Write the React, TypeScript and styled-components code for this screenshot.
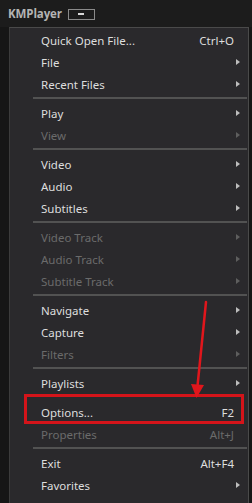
import styled, { createGlobalStyle } from "styled-components";

const GlobalStyle = createGlobalStyle`
  html, body {
    margin: 0;
    padding: 0;
    background-color: #151515;
    font-family: "Noto Sans", "Liberation Sans", sans-serif;
  }
`;

const Screen = styled.div`
  position: relative;
  width: 252px;
  height: 503px;
  overflow: hidden;
  background-color: #151515;
`;

const TitleBar = styled.div`
  display: flex;
  align-items: center;
  gap: 6px;
  height: 27px;
  padding: 0 0 0 8px;
  background-color: #1c1c1c;
`;

const AppName = styled.span`
  font-family: "Open Sans", "Liberation Sans", sans-serif;
  font-size: 11.5px;
  font-weight: 700;
  color: #b4b4b4;
  letter-spacing: -0.1px;
`;

const MinButton = styled.div`
  display: flex;
  align-items: center;
  justify-content: center;
  width: 25px;
  height: 9px;
  border: 1px solid #8a8a8a;
  margin-top: 1px;

  &::after {
    content: "";
    width: 6px;
    height: 2px;
    background-color: #d8d8d8;
  }
`;

const Body = styled.div`
  display: flex;
  height: 476px;
`;

const Gutter = styled.div<{ $w: number }>`
  width: ${(p) => p.$w}px;
  flex-shrink: 0;
  background-color: #161616;
`;

const Menu = styled.div`
  flex: 1;
  display: flex;
  flex-direction: column;
  padding-top: 1px;
  background-color: #2a292c;
  border-top: 1px solid #4a4a4a;
  border-left: 1px solid #3c3c3c;
  border-right: 1px solid #4a4a4a;
`;

const Item = styled.div<{ $disabled?: boolean; $extra?: number }>`
  display: flex;
  align-items: center;
  height: 22px;
  margin-top: ${(p) => p.$extra ?? 0}px;
  padding: 0 8px 0 31px;
  font-size: 11.5px;
  color: ${(p) => (p.$disabled ? "#6b6b6b" : "#dedede")};
`;

const Label = styled.span`
  flex: 1;
  white-space: nowrap;
`;

const Shortcut = styled.span`
  margin-right: 6px;
  white-space: nowrap;
`;

const Arrow = styled.span<{ $disabled?: boolean }>`
  width: 0;
  height: 0;
  border-top: 3.5px solid transparent;
  border-bottom: 3.5px solid transparent;
  border-left: 4px solid ${(p) => (p.$disabled ? "#5e5e5e" : "#bdbdbd")};
`;

const Separator = styled.div`
  height: 2px;
  margin: 2px 1px 3px 23px;
  background-color: #525252;
`;

const Highlight = styled.div`
  position: absolute;
  left: 24px;
  top: 394px;
  width: 214px;
  height: 24px;
  border: 3px solid #d4141a;
`;

const Annotation = styled.svg`
  position: absolute;
  left: 0;
  top: 0;
  pointer-events: none;
`;

type Entry =
  | { sep: true }
  | { label: string; shortcut?: string; sub?: boolean; disabled?: boolean; extra?: number };

const entries: Entry[] = [
  { label: "Quick Open File...", shortcut: "Ctrl+O" },
  { label: "File", sub: true },
  { label: "Recent Files", sub: true },
  { sep: true },
  { label: "Play", sub: true },
  { label: "View", sub: true, disabled: true },
  { sep: true },
  { label: "Video", sub: true },
  { label: "Audio", sub: true },
  { label: "Subtitles", sub: true },
  { sep: true },
  { label: "Video Track", sub: true, disabled: true },
  { label: "Audio Track", sub: true, disabled: true },
  { label: "Subtitle Track", sub: true, disabled: true },
  { sep: true },
  { label: "Navigate", sub: true },
  { label: "Capture", sub: true },
  { label: "Filters", sub: true, disabled: true },
  { sep: true },
  { label: "Playlists", sub: true },
  { label: "Options...", shortcut: "F2", extra: 7 },
  { label: "Properties", shortcut: "Alt+J", disabled: true },
  { sep: true },
  { label: "Exit", shortcut: "Alt+F4" },
  { label: "Favorites", sub: true },
];

export default function App() {
  return (
    <>
      <GlobalStyle />
      <Screen>
        <TitleBar>
          <AppName>KMPlayer</AppName>
          <MinButton />
        </TitleBar>
        <Body>
          <Gutter $w={9} />
          <Menu>
            {entries.map((e, i) =>
              "sep" in e ? (
                <Separator key={i} />
              ) : (
                <Item key={i} $disabled={e.disabled} $extra={e.extra}>
                  <Label>{e.label}</Label>
                  {e.shortcut && <Shortcut>{e.shortcut}</Shortcut>}
                  {e.sub && <Arrow $disabled={e.disabled} />}
                </Item>
              )
            )}
          </Menu>
          <Gutter $w={3} />
        </Body>
        <Highlight />
        <Annotation width="252" height="503" viewBox="0 0 252 503">
          <line x1="206" y1="302" x2="197.5" y2="386" stroke="#e0161c" strokeWidth="2.5" strokeLinecap="round" />
          <polygon points="191,384 204,385 196.5,398" fill="#e0161c" />
        </Annotation>
      </Screen>
    </>
  );
}
